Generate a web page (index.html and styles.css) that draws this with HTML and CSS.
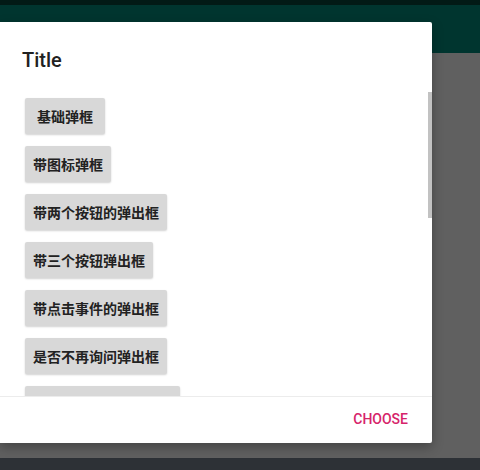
FILE: index.html
```html
<!DOCTYPE html>
<html lang="zh">
<head>
<meta charset="utf-8">
<link rel="stylesheet" href="styles.css">
</head>
<body>
<div class="screen">
  <div class="dialog">
    <div class="dialog-title">Title</div>
    <div class="dialog-body">
      <div class="btn-list">
        <div class="btn">基础弹框</div>
        <div class="btn">带图标弹框</div>
        <div class="btn">带两个按钮的弹出框</div>
        <div class="btn">带三个按钮弹出框</div>
        <div class="btn">带点击事件的弹出框</div>
        <div class="btn">是否不再询问弹出框</div>
        <div class="btn btn-wide"></div>
      </div>
      <div class="scroll-thumb"></div>
    </div>
    <div class="dialog-footer">
      <span class="action">CHOOSE</span>
    </div>
  </div>
</div>
</body>
</html>
```

FILE: styles.css
```css
html, body {
  margin: 0;
  padding: 0;
}
body {
  width: 480px;
  height: 470px;
  overflow: hidden;
}
.screen {
  height: 470px;
  padding-top: 22px;
  box-sizing: border-box;
  background: linear-gradient(to bottom,
    #021a16 0, #021a16 5px,
    #00352f 5px, #00352f 53px,
    #606060 53px, #606060 458px,
    #2d3136 458px);
}
.dialog {
  width: 432px;
  height: 421px;
  background: #fff;
  border-radius: 0 2px 2px 0;
  box-shadow: 0 4px 12px rgba(0,0,0,0.3);
  display: flex;
  flex-direction: column;
}
.dialog-title {
  padding: 26px 0 0 22px;
  font-family: Roboto, "Noto Sans", sans-serif;
  font-weight: 500;
  font-size: 20px;
  line-height: 24px;
  color: #212121;
}
.dialog-body {
  position: relative;
  height: 324px;
  overflow: hidden;
}
.btn-list {
  display: flex;
  flex-direction: column;
  align-items: flex-start;
  gap: 12px;
  padding: 26px 0 0 25px;
}
.btn {
  min-width: 80px;
  height: 36px;
  box-sizing: border-box;
  padding: 0 8px;
  display: flex;
  align-items: center;
  justify-content: center;
  background: #d8d8d8;
  border-radius: 2px;
  box-shadow: 0 1px 2px rgba(0,0,0,0.18);
  font-family: "Noto Sans CJK SC", sans-serif;
  font-weight: 700;
  font-size: 14px;
  color: #222;
}
.btn-wide {
  width: 155px;
}
.scroll-thumb {
  position: absolute;
  right: 0;
  top: 20px;
  width: 4px;
  height: 126px;
  background: #c2c2c2;
}
.dialog-footer {
  flex: 1;
  border-top: 1px solid #ececec;
  padding: 14px 24px 0 0;
  display: flex;
  justify-content: flex-end;
  align-items: flex-start;
}
.action {
  font-family: Roboto, "Noto Sans", sans-serif;
  font-weight: 500;
  font-size: 14px;
  line-height: 16px;
  color: #d6246a;
}
```
